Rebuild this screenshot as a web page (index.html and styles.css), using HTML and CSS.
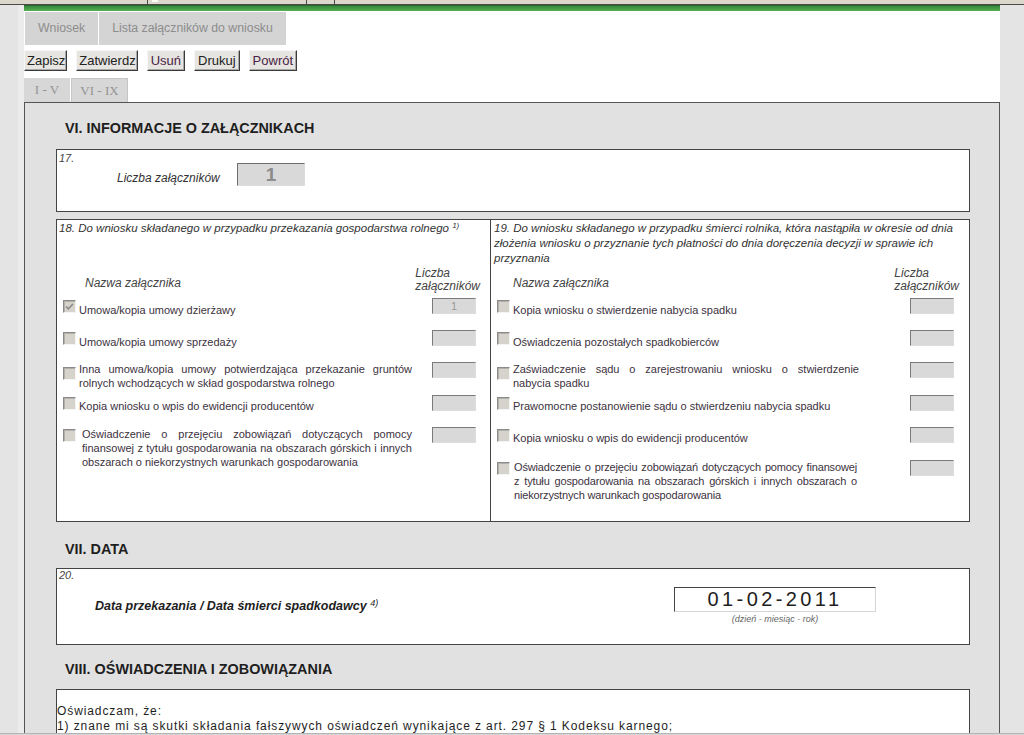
FILE: index.html
```html
<!DOCTYPE html>
<html lang="pl">
<head>
<meta charset="utf-8">
<title>Wniosek – Lista załączników do wniosku</title>
<link rel="stylesheet" href="styles.css">
</head>
<body>
<div class="topstrip">
  <span class="seg seg1"></span>
  <span class="seg seg2"><span class="seg-mark"></span></span>
  <span class="seg seg3"></span>
</div>
<div class="page">
  <div class="gutter"></div>
  <div class="content">
    <div class="greenbar"></div>

    <div class="tabs">
      <div class="tab">Wniosek</div>
      <div class="tab">Lista załączników do wniosku</div>
    </div>

    <div class="toolbar">
      <button class="btn">Zapisz</button>
      <button class="btn">Zatwierdz</button>
      <button class="btn btn-alt btn-wide">Usuń</button>
      <button class="btn btn-wide">Drukuj</button>
      <button class="btn btn-alt btn-wide">Powrót</button>
    </div>

    <div class="subtabs">
      <div class="subtab">I - V</div>
      <div class="subtab active">VI - IX</div>
    </div>

    <div class="panel">
      <h2 class="sect sect-vi">VI. INFORMACJE O ZAŁĄCZNIKACH</h2>

      <div class="box box17">
        <div class="num">17.</div>
        <div class="count-row">
          <span class="count-label">Liczba załączników</span>
          <span class="count-input">1</span>
        </div>
      </div>

      <div class="box attach">
        <div class="col col-left">
          <div class="col-title">18. Do wniosku składanego w przypadku przekazania gospodarstwa rolnego <sup>1)</sup></div>
          <div class="col-head">
            <span class="head-name">Nazwa załącznika</span>
            <span class="head-count">Liczba<br>załączników</span>
          </div>
          <div class="row">
            <span class="cb checked"><svg viewBox="0 0 11 11" width="11" height="11"><path d="M2 5.5 L4.3 7.8 L9 3" fill="none" stroke="#8a8a8a" stroke-width="1.6"/></svg></span>
            <span class="rtext single">Umowa/kopia umowy dzierżawy</span>
            <span class="num-input">1</span>
          </div>
          <div class="row">
            <span class="cb"></span>
            <span class="rtext single">Umowa/kopia umowy sprzedaży</span>
            <span class="num-input"></span>
          </div>
          <div class="row tall">
            <span class="cb low"></span>
            <span class="rtext">Inna umowa/kopia umowy potwierdzająca przekazanie gruntów rolnych wchodzących w skład gospodarstwa rolnego</span>
            <span class="num-input"></span>
          </div>
          <div class="row">
            <span class="cb"></span>
            <span class="rtext single-b">Kopia wniosku o wpis do ewidencji producentów</span>
            <span class="num-input"></span>
          </div>
          <div class="row tall">
            <span class="cb"></span>
            <span class="rtext indent">Oświadczenie o przejęciu zobowiązań dotyczących pomocy finansowej z tytułu gospodarowania na obszarach górskich i innych obszarach o niekorzystnych warunkach gospodarowania</span>
            <span class="num-input"></span>
          </div>
        </div>

        <div class="col col-right">
          <div class="col-title">19. Do wniosku składanego w przypadku śmierci rolnika, która nastąpiła w okresie od dnia złożenia wniosku o przyznanie tych płatności do dnia doręczenia decyzji w sprawie ich przyznania</div>
          <div class="col-head">
            <span class="head-name">Nazwa załącznika</span>
            <span class="head-count">Liczba<br>załączników</span>
          </div>
          <div class="row">
            <span class="cb"></span>
            <span class="rtext single">Kopia wniosku o stwierdzenie nabycia spadku</span>
            <span class="num-input"></span>
          </div>
          <div class="row">
            <span class="cb"></span>
            <span class="rtext single">Oświadczenia pozostałych spadkobierców</span>
            <span class="num-input"></span>
          </div>
          <div class="row tall">
            <span class="cb low"></span>
            <span class="rtext">Zaświadczenie sądu o zarejestrowaniu wniosku o stwierdzenie nabycia spadku</span>
            <span class="num-input"></span>
          </div>
          <div class="row">
            <span class="cb"></span>
            <span class="rtext single-b">Prawomocne postanowienie sądu o stwierdzeniu nabycia spadku</span>
            <span class="num-input"></span>
          </div>
          <div class="row tall">
            <span class="cb"></span>
            <span class="rtext single-b">Kopia wniosku o wpis do ewidencji producentów</span>
            <span class="num-input"></span>
          </div>
          <div class="row">
            <span class="cb"></span>
            <span class="rtext indent1">Oświadczenie o przejęciu zobowiązań dotyczących pomocy finansowej z tytułu gospodarowania na obszarach górskich i innych obszarach o niekorzystnych warunkach gospodarowania</span>
            <span class="num-input"></span>
          </div>
        </div>
      </div>

      <h2 class="sect sect-vii">VII. DATA</h2>

      <div class="box box20">
        <div class="num">20.</div>
        <div class="date-row">
          <span class="date-label">Data przekazania / Data śmierci spadkodawcy <sup>4)</sup></span>
          <div class="date-block">
            <div class="date-input">01-02-2011</div>
            <div class="date-hint">(dzień - miesiąc - rok)</div>
          </div>
        </div>
      </div>

      <h2 class="sect sect-viii">VIII. OŚWIADCZENIA I ZOBOWIĄZANIA</h2>

      <div class="box box-decl">
        <p class="decl">Oświadczam, że:</p>
        <p class="decl">1) znane mi są skutki składania fałszywych oświadczeń wynikające z art. 297 § 1 Kodeksu karnego;</p>
        <p class="decl">2) zapoznałem się z zasadami przyznawania płatności;</p>
      </div>
    </div>
  </div>
</div>
<div class="bottomline"></div>
</body>
</html>
```

FILE: styles.css
```css
* { box-sizing: border-box; }

html, body {
  margin: 0;
  height: 100%;
  overflow: hidden;
}

body {
  background: #e4e4e4;
  font-family: "Liberation Sans", Arial, sans-serif;
  color: #222;
}

/* top browser/toolbar remnant */
.topstrip {
  display: flex;
  height: 5px;
  background: #dcd7cb;
  border-bottom: 1px solid #4a4a4a;
}
.seg {
  height: 4px;
  border-right: 1px solid #4a4a4a;
  position: relative;
}
.seg1 { width: 148px; }
.seg2 { width: 159px; }
.seg3 { width: 28px; }
.seg-mark {
  position: absolute;
  left: 4px;
  top: 0;
  width: 6px;
  height: 2px;
  background: #fbfbf6;
}

.page {
  display: flex;
  padding-left: 18px;
  height: 730px;
}
.gutter {
  width: 6px;
  background: #ececec;
}
.content {
  width: 976px;
  background: #fff;
}

.greenbar {
  height: 6px;
  background: linear-gradient(#35883a, #46a046 60%, #5aae57);
  border-top: 1px solid #2a6a2c;
}

/* main tabs */
.tabs {
  display: flex;
  gap: 1px;
  margin: 1px 0 0 1px;
}
.tab {
  height: 33px;
  line-height: 33px;
  padding: 0 13px;
  background: #d4d4d4;
  color: #8d8d8d;
  font-size: 12.3px;
}

/* buttons */
.toolbar {
  display: flex;
  gap: 9px;
  margin-top: 5px;
}
.btn {
  height: 21px;
  padding: 0 1px 0 2px;
  font-family: "Liberation Sans", Arial, sans-serif;
  font-size: 13px;
  color: #222;
  background: #e6e5e1;
  border: 1px solid;
  border-color: #f6f6f6 #3a3a3a #3a3a3a #f6f6f6;
  box-shadow: inset -1px -1px 0 #a8a8a8;
  border-radius: 0;
  line-height: 18px;
}
.btn-wide { padding: 0 3px; }
.btn-alt { color: #4a2344; }

/* sub tabs */
.subtabs {
  display: flex;
  gap: 1px;
  margin-top: 7px;
}
.subtab {
  height: 24px;
  line-height: 24px;
  background: #d7d7d7;
  color: #949494;
  font-family: "Liberation Serif", "Times New Roman", serif;
  font-size: 13px;
  text-align: center;
}
.subtab:first-child { width: 46px; }
.subtab.active {
  width: 57px;
  border: 1px solid #c6c6c6;
  border-bottom: 0;
  line-height: 23px;
}

/* panel */
.panel {
  border: 1px solid #555;
  background: #e1e1e1;
  padding: 0 29px 0 31px;
  height: 640px;
  overflow: hidden;
}

.sect {
  margin: 0 0 0 9px;
  font-size: 14.4px;
  line-height: 16px;
  font-weight: bold;
  color: #1e1e1e;
}
.sect-vi { margin-top: 17px; margin-bottom: 13px; }
.sect-vii { margin-top: 19px; margin-bottom: 11px; }
.sect-viii { margin-top: 16px; margin-bottom: 12px; }

.box {
  background: #fff;
  border: 1px solid #444;
}

.num {
  font-size: 11px;
  font-style: italic;
  line-height: 12px;
  color: #444;
  padding-left: 2px;
}

/* box 17 */
.box17 {
  height: 63px;
  padding-top: 2px;
}
.count-row {
  display: flex;
  align-items: flex-end;
  margin: -1px 0 0 60px;
}
.count-label {
  width: 120px;
  font-size: 12px;
  font-style: italic;
  line-height: 14px;
  padding-bottom: 1px;
  color: #333;
}
.count-input {
  width: 68px;
  height: 23px;
  line-height: 21px;
  text-align: center;
  font-size: 19px;
  font-weight: bold;
  color: #8c8c8c;
  background: #d9d9d9;
  border: 1px solid;
  border-color: #6e6e6e #dcdcdc #dcdcdc #6e6e6e;
}

/* box 18 / 19 */
.attach {
  margin-top: 7px;
  height: 303px;
  display: grid;
  grid-template-columns: 433px 1fr;
}
.col-right { border-left: 1px solid #444; }

.col-title {
  height: 47px;
  padding-top: 1px;
  font-size: 11.5px;
  font-style: italic;
  line-height: 15px;
  color: #333;
}
.col-left .col-title { padding-left: 2px; }
.col-right .col-title { padding-left: 3px; padding-right: 4px; }
.col-title sup {
  font-size: 8px;
  vertical-align: 4px;
  line-height: 0;
}

.col-head {
  display: flex;
  justify-content: space-between;
  height: 26px;
  margin-bottom: 5px;
  font-size: 12px;
  font-style: italic;
  color: #444;
}
.head-name {
  align-self: flex-end;
  line-height: 14px;
  padding-bottom: 3px;
}
.col-left .head-name { margin-left: 28px; }
.col-right .head-name { margin-left: 22px; }
.head-count {
  line-height: 13px;
  margin-right: 10px;
}

.row {
  display: flex;
  align-items: flex-start;
  height: 32px;
}
.row.tall { height: 33px; }

.cb {
  flex: none;
  width: 13px;
  height: 13px;
  margin: 2px 0 0 6px;
  background: #d6d3cc;
  border: 1px solid;
  border-color: #8a8a8a #f4f4f4 #f4f4f4 #8a8a8a;
  box-shadow: inset 1px 1px 0 #b3b0aa;
  display: flex;
  align-items: center;
  justify-content: center;
}
.cb.low { margin-top: 5px; }

.rtext {
  flex: none;
  margin-left: 3px;
  font-size: 11px;
  line-height: 14px;
  color: #3b3240;
  text-align: justify;
}
.col-left .rtext { width: 333px; }
.col-right .rtext { width: 346px; }
.rtext.single { padding-top: 5px; }
.rtext.single-b { padding-top: 4px; }
.col-left .rtext.indent { padding-left: 3px; }
.col-right .rtext.indent1 {
  width: 344px;
  padding-left: 1px;
  letter-spacing: -0.15px;
}

.num-input {
  flex: none;
  margin-left: auto;
  width: 44px;
  height: 16px;
  line-height: 14px;
  text-align: center;
  font-size: 11px;
  color: #9a9a9a;
  background: #d9d9d9;
  border: 1px solid;
  border-color: #7a7a7a #dddddd #dddddd #7a7a7a;
}
.col-left .num-input { margin-right: 14px; }
.col-right .num-input { margin-right: 15px; }

/* box 20 */
.box20 { height: 77px; }
.date-row {
  display: flex;
  margin-top: 6px;
}
.date-label {
  flex: 0 0 617px;
  padding: 12px 0 0 38px;
  font-size: 12.5px;
  font-weight: bold;
  font-style: italic;
  line-height: 14px;
  color: #1e1e1e;
}
.date-label sup {
  font-size: 9px;
  font-weight: normal;
  vertical-align: 4px;
  line-height: 0;
}
.date-block { width: 202px; }
.date-input {
  height: 25px;
  border: 1px solid;
  border-color: #444 #d6d6d6 #d6d6d6 #444;
  background: #fff;
  text-align: center;
  font-size: 20px;
  letter-spacing: 3.4px;
  line-height: 23px;
  color: #1e1e1e;
}
.date-hint {
  margin-top: 2px;
  text-align: center;
  font-size: 9px;
  font-style: italic;
  line-height: 10px;
  color: #666;
}

/* box VIII */
.box-decl {
  height: 120px;
  padding-top: 14px;
}
.decl {
  margin: 0;
  font-size: 12px;
  line-height: 15px;
  letter-spacing: 0.9px;
  color: #1e1e1e;
}

.bottomline {
  position: fixed;
  left: 0;
  right: 0;
  bottom: 0;
  height: 2px;
  background: #d6d6d6;
  border-top: 1px solid #b4b4b4;
}
```
